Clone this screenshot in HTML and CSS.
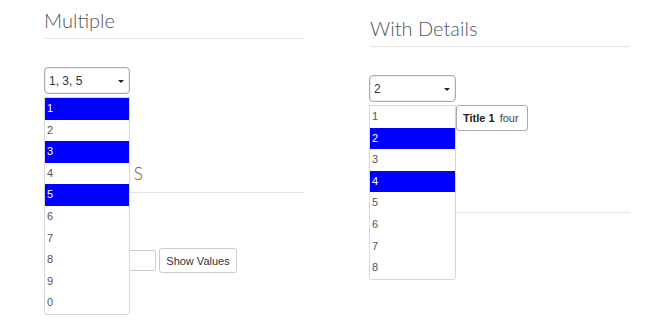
FILE: index.html
```html
<!DOCTYPE html>
<html>
<head>
<meta charset="utf-8">
<link rel="stylesheet" href="styles.css">
</head>
<body>
<div class="page">
  <div class="col col-left">
    <section class="sec">
      <h2 class="title">Multiple</h2>
      <hr class="rule">
      <div class="picker picker-left">
        <div class="select"><span>1, 3, 5</span><span class="caret"></span></div>
        <ul class="menu">
          <li class="on">1</li>
          <li>2</li>
          <li class="on">3</li>
          <li>4</li>
          <li class="on">5</li>
          <li>6</li>
          <li>7</li>
          <li>8</li>
          <li>9</li>
          <li>0</li>
        </ul>
      </div>
    </section>
    <section class="sec sec2">
      <h2 class="title small">METHOD<span class="tail">S</span></h2>
      <hr class="rule">
      <div class="form-row">
        <input class="field" type="text">
        <button class="btn">Show Values</button>
      </div>
    </section>
  </div>
  <div class="col col-right">
    <section class="sec">
      <h2 class="title">With Details</h2>
      <hr class="rule">
      <div class="picker picker-right">
        <div class="select"><span>2</span><span class="caret"></span></div>
        <ul class="menu">
          <li>1</li>
          <li class="on">2</li>
          <li>3</li>
          <li class="on">4</li>
          <li>5</li>
          <li>6</li>
          <li>7</li>
          <li>8</li>
        </ul>
        <div class="tip"><b>Title 1</b> four</div>
      </div>
    </section>
    <section class="sec sec2r">
      <div class="spacer"></div>
      <hr class="rule">
    </section>
  </div>
</div>
</body>
</html>
```
FILE: styles.css
```css
html, body {
  margin: 0;
  padding: 0;
  background: #fff;
}
body {
  min-height: 330px;
  font-family: "Liberation Sans", Arial, sans-serif;
  color: #333;
}
.page {
  display: grid;
  grid-template-columns: 260px 260px;
  column-gap: 66px;
  padding-left: 44px;
  min-height: 330px;
}
.title {
  margin: 0;
  font-family: Lato, "Open Sans", sans-serif;
  font-weight: 300;
  font-size: 20px;
  line-height: 28px;
  color: #555;
}
.title.small {
  font-size: 17px;
  line-height: 22px;
  letter-spacing: 2px;
}
.title .tail {
  margin-left: 3.5px;
  letter-spacing: 0;
}
.rule {
  margin: 0;
  border: 0;
  border-top: 1px solid #e3e3e3;
  height: 0;
}
.col-left .sec:first-child .title {
  padding-top: 6px;
  padding-bottom: 4px;
}
.col-right .sec:first-child .title {
  padding-top: 14px;
  padding-bottom: 4px;
}
.picker {
  position: relative;
  margin-top: 28px;
}
.picker-left .select { width: 86px; }
.picker-right { margin-left: -1px; }
.picker-right .select { width: 87px; }
.select {
  box-sizing: border-box;
  height: 27px;
  border: 1px solid #aaa;
  border-radius: 4px;
  box-shadow: inset 0 0 0 1px #eee;
  display: flex;
  align-items: center;
  justify-content: space-between;
  padding: 0 5px 0 4px;
  font-size: 12px;
  color: #333;
}
.caret {
  width: 0;
  height: 0;
  border-left: 3px solid transparent;
  border-right: 3px solid transparent;
  border-top: 3px solid #222;
  margin-top: 2px;
}
.menu {
  position: absolute;
  left: 0;
  top: 30px;
  margin: 0;
  padding: 0;
  list-style: none;
  box-sizing: border-box;
  border: 1px solid #d8d8d8;
  border-radius: 0 0 3px 3px;
  background: #fff;
  z-index: 2;
}
.picker-left .menu { width: 86px; }
.picker-right .menu { width: 87px; }
.menu li {
  height: 21.6px;
  line-height: 21.6px;
  padding-left: 2px;
  font-size: 11px;
  color: #555;
}
.menu li.on {
  background: #0000ff;
  color: #fff;
}
.tip {
  position: absolute;
  left: 87px;
  top: 30px;
  box-sizing: border-box;
  height: 26px;
  padding: 0 8px 0 6px;
  border: 1px solid #aaa;
  border-radius: 3px;
  background: #fff;
  font-size: 11px;
  line-height: 24px;
  color: #444;
  white-space: nowrap;
  z-index: 3;
}
.tip b {
  color: #222;
  margin-right: 2px;
}
.sec2 {
  margin-top: 69px;
}
.sec2 .title {
  padding-bottom: 7px;
}
.form-row {
  display: flex;
  align-items: center;
  gap: 3px;
  margin-top: 55px;
}
.field {
  box-sizing: border-box;
  width: 112px;
  height: 21px;
  margin: 0;
  border: 1px solid #ccc;
  border-radius: 2px;
}
.btn {
  box-sizing: border-box;
  width: 78px;
  height: 25px;
  margin: 0;
  padding: 0;
  border: 1px solid #ccc;
  border-radius: 3px;
  background: #fff;
  font-family: "Liberation Sans", Arial, sans-serif;
  font-size: 11px;
  color: #333;
}
.sec2r {
  margin-top: 80px;
}
.spacer {
  height: 30px;
}
```
